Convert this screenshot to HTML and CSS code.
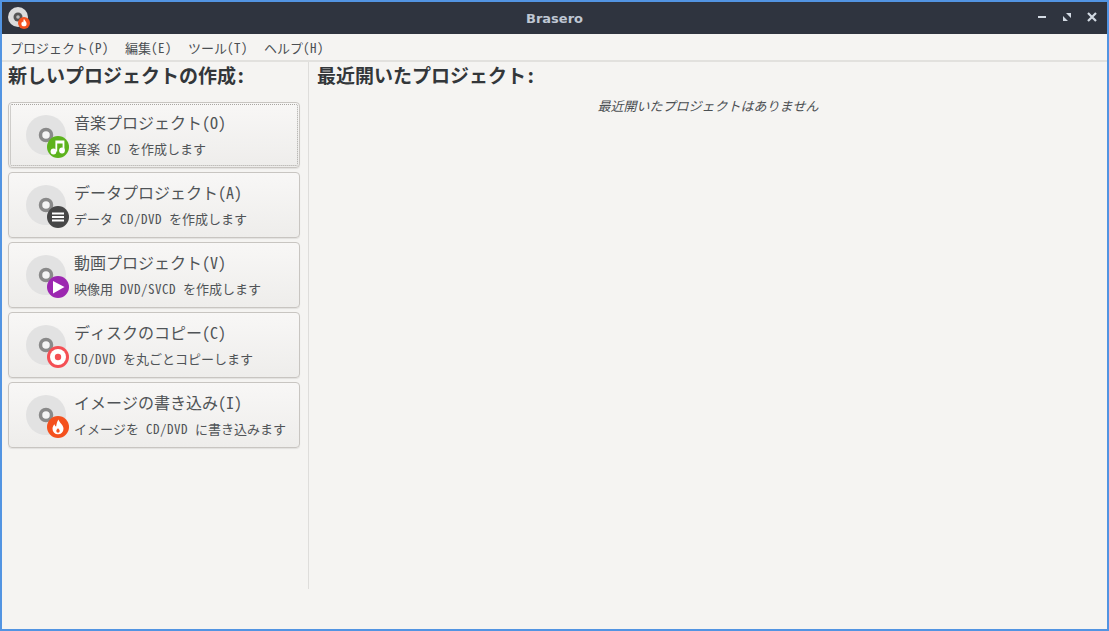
FILE: index.html
```html
<!DOCTYPE html>
<html lang="ja">
<head>
<meta charset="utf-8">
<title>Brasero</title>
<link rel="stylesheet" href="styles.css">
</head>
<body>
<div class="window">
  <header class="titlebar">
    <svg class="app-icon" width="24" height="24" viewBox="0 0 24 24">
      <circle cx="10" cy="10" r="10" fill="#dcdcdc"/>
      <circle cx="10" cy="10" r="4.5" fill="#555"/>
      <circle cx="10" cy="10" r="1.8" fill="#bbb"/>
      <circle cx="16" cy="16" r="6" fill="#f4511e"/>
      <path d="M16 11.8c.3 1.500 2.600 2.600 2.600 4.900a2.600 2.600 0 0 1-5.200 0c0-1 .5-1.700 1-2.200.1.700.4 1 .8 1.100.3-1.200.1-2.500.8-3.800z" fill="#fff"/>
    </svg>
    <span class="title">Brasero</span>
    <div class="controls">
      <svg width="12" height="12" viewBox="0 0 12 12"><rect x="2" y="5" width="8" height="2" fill="#d3dae3"/></svg>
      <svg width="12" height="12" viewBox="0 0 12 12"><path d="M5 2h5v5zM2 5l5 5H2z" fill="#d3dae3"/></svg>
      <svg width="12" height="12" viewBox="0 0 12 12"><path d="M2 2l8 8M10 2l-8 8" stroke="#d3dae3" stroke-width="2.200"/></svg>
    </div>
  </header>
  <nav class="menubar">
    <span class="menu-item">プロジェクト<span class="lat">(P)</span></span>
    <span class="menu-item">編集<span class="lat">(E)</span></span>
    <span class="menu-item">ツール<span class="lat">(T)</span></span>
    <span class="menu-item">ヘルプ<span class="lat">(H)</span></span>
  </nav>
  <main class="content">
    <section class="left">
      <h2 class="heading">新しいプロジェクトの作成:</h2>
      <div class="buttons">
        <button class="project focused">
          <span class="focus-ring">
          <svg class="disc" width="48" height="48" viewBox="0 0 48 48">
            <circle cx="20" cy="20" r="20" fill="#e2e2e2"/><circle cx="20" cy="20" r="5.500" fill="#f5f5f5" stroke="#8a8a8a" stroke-width="3.500"/>
            <circle cx="32" cy="32" r="11" fill="#5db31d"/>
            <circle cx="27.500" cy="36.500" r="2.900" fill="#fff"/><circle cx="36" cy="35.500" r="2.900" fill="#fff"/>
            <path d="M29.400 36.500V25.500h9V35.500h-1.800V28.500h-5.400v8z" fill="#fff"/>
          </svg>
          <span class="labels"><span class="main">音楽プロジェクト(O)</span><span class="sub">音楽<span class="lat"> CD </span>を作成します</span></span>
          </span>
        </button>
        <button class="project">
          <svg class="disc" width="48" height="48" viewBox="0 0 48 48">
            <circle cx="20" cy="20" r="20" fill="#e2e2e2"/><circle cx="20" cy="20" r="5.500" fill="#f5f5f5" stroke="#8a8a8a" stroke-width="3.500"/>
            <circle cx="32" cy="32" r="11" fill="#474747"/>
            <path d="M26 27.500h12v2H26zM26 31h12v2H26zM26 34.500h12v2H26z" fill="#fff"/>
          </svg>
          <span class="labels"><span class="main">データプロジェクト(A)</span><span class="sub">データ<span class="lat"> CD/DVD </span>を作成します</span></span>
        </button>
        <button class="project">
          <svg class="disc" width="48" height="48" viewBox="0 0 48 48">
            <circle cx="20" cy="20" r="20" fill="#e2e2e2"/><circle cx="20" cy="20" r="5.500" fill="#f5f5f5" stroke="#8a8a8a" stroke-width="3.500"/>
            <circle cx="32" cy="32" r="11" fill="#9c27b0"/>
            <path d="M27 26l11.500 6-11.500 6.500z" fill="#fff"/>
          </svg>
          <span class="labels"><span class="main">動画プロジェクト(V)</span><span class="sub">映像用<span class="lat"> DVD/SVCD </span>を作成します</span></span>
        </button>
        <button class="project">
          <svg class="disc" width="48" height="48" viewBox="0 0 48 48">
            <circle cx="20" cy="20" r="20" fill="#e2e2e2"/><circle cx="20" cy="20" r="5.500" fill="#f5f5f5" stroke="#8a8a8a" stroke-width="3.500"/>
            <circle cx="32" cy="32" r="11" fill="#f44f54"/>
            <circle cx="32" cy="32" r="8" fill="#fff"/><circle cx="32" cy="32" r="3.200" fill="#f44f54"/>
          </svg>
          <span class="labels"><span class="main">ディスクのコピー(C)</span><span class="sub"><span class="lat">CD/DVD </span>を丸ごとコピーします</span></span>
        </button>
        <button class="project">
          <svg class="disc" width="48" height="48" viewBox="0 0 48 48">
            <circle cx="20" cy="20" r="20" fill="#e2e2e2"/><circle cx="20" cy="20" r="5.500" fill="#f5f5f5" stroke="#8a8a8a" stroke-width="3.500"/>
            <circle cx="32" cy="32" r="11" fill="#f4511e"/>
            <path d="M32.500 24.500c.5 3 5 5 5 9.300a5.500 5.500 0 0 1-11 0c0-2 1-3.500 2-4.500.2 1.300.8 2 1.600 2.300.5-2.500.7-4.800 2.400-7.100zM32 33c-.3 1-1.700 1.500-1.700 3a1.700 1.700 0 0 0 3.400 0c0-1.500-1.400-2-1.700-3z" fill="#fff" fill-rule="evenodd"/>
          </svg>
          <span class="labels"><span class="main">イメージの書き込み(I)</span><span class="sub">イメージを<span class="lat"> CD/DVD </span>に書き込みます</span></span>
        </button>
      </div>
    </section>
    <section class="right">
      <h2 class="heading">最近開いたプロジェクト:</h2>
      <p class="empty">最近開いたプロジェクトはありません</p>
    </section>
  </main>
</div>
</body>
</html>
```
FILE: styles.css
```css
* { box-sizing: border-box; }
html, body { margin: 0; padding: 0; height: 100%; overflow: hidden; }
body {
  font-family: "Noto Sans Mono CJK JP", "Noto Sans CJK JP", monospace;
  color: #3c4043;
}
.window {
  width: 1109px;
  height: 631px;
  border: 2px solid #5294e2;
  background: #f5f4f2;
  display: flex;
  flex-direction: column;
}
.titlebar {
  height: 32px;
  background: #2f343f;
  display: flex;
  align-items: center;
  justify-content: center;
  position: relative;
  flex: none;
}
.app-icon { position: absolute; left: 6px; top: 5px; }
.title {
  font-family: "DejaVu Sans", sans-serif;
  font-size: 13px;
  font-weight: 700;
  color: #bfc7d3;
}
.controls {
  position: absolute;
  right: 9px;
  top: 9px;
  display: flex;
  gap: 13px;
}
.lat { letter-spacing: .5px; white-space: pre; }
.menubar {
  height: 28px;
  flex: none;
  display: flex;
  align-items: center;
  gap: 16px;
  padding: 0 8px;
  border-bottom: 2px solid #e2e1de;
  font-size: 13px;
  color: #4b4f52;
}
.content { flex: 1; display: flex; min-height: 0; padding-bottom: 40px; }
.left {
  width: 307px;
  flex: none;
  border-right: 1px solid #dedddb;
  padding: 0 6px;
}
.right { flex: 1; padding: 0 8px; }
.heading {
  margin: -1px 0 0;
  font-size: 19px;
  line-height: 28px;
  font-weight: 700;
  color: #33373a;
}
.buttons {
  display: flex;
  flex-direction: column;
  gap: 4px;
  margin-top: 13px;
}
.project {
  height: 66px;
  width: 292px;
  padding: 0;
  border: 1px solid #c8c5c1;
  border-radius: 4px;
  background: linear-gradient(#f8f7f6, #eeedeb);
  box-shadow: 0 1px 1px rgba(0,0,0,.08);
  display: flex;
  align-items: flex-start;
  font-family: inherit;
  color: inherit;
  text-align: left;
}
.project .disc { margin: 12px 0 0 17px; flex: none; }
.focus-ring {
  display: flex;
  flex: 1;
  height: 62px;
  margin: 1px;
  border: 1px dotted #a8a6a2;
  border-radius: 2px;
}
.focused .disc { margin: 10px 0 0 15px; }
.labels {
  display: flex;
  flex-direction: column;
  margin: 7px 0 0 0;
}
.main { font-size: 16px; line-height: 24px; color: #505457; }
.sub { font-size: 13px; line-height: 18px; margin-top: 6px; color: #505457; }
.focused .labels { margin-top: 5px; }
.empty {
  margin: 8px 0 0;
  text-align: center;
  font-size: 13px;
  line-height: 18px;
  font-style: italic;
  color: #4b4f52;
}
```
